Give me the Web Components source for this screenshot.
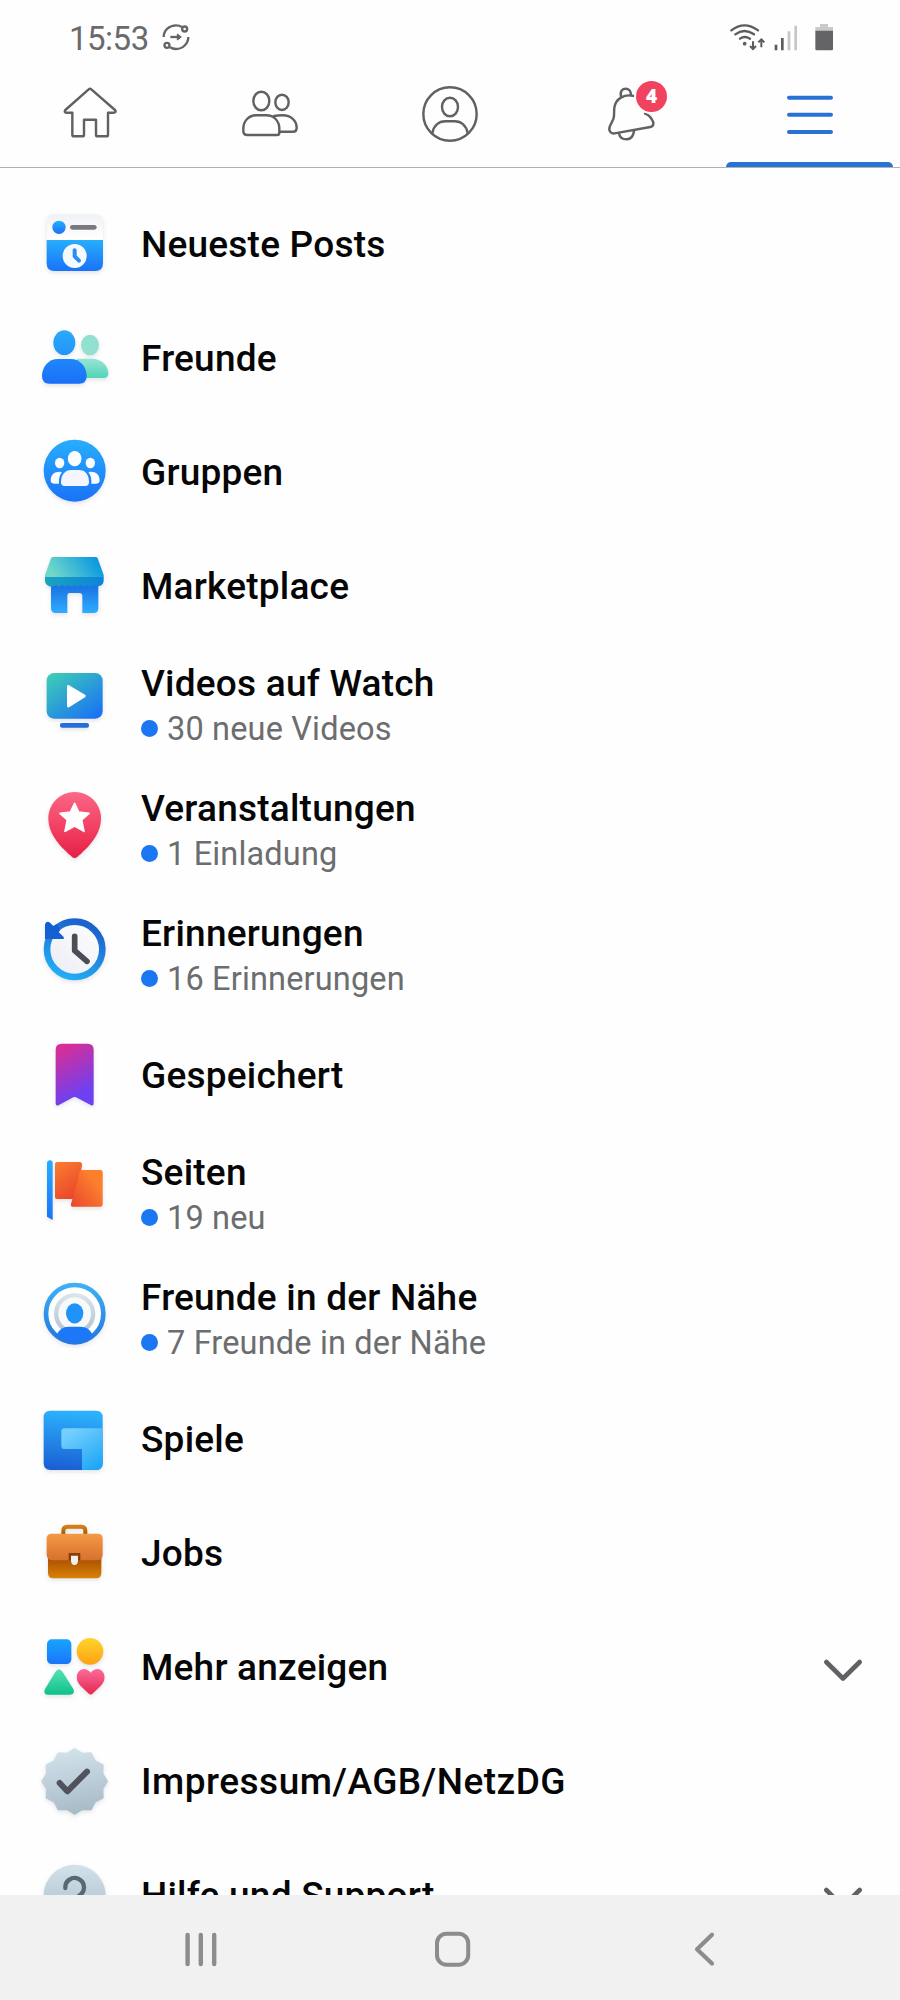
<!DOCTYPE html>
<html lang="de">
<head>
<meta charset="utf-8">
<title>Menü</title>
<style>
html,body{margin:0;padding:0}
body{width:900px;height:2000px;overflow:hidden;background:#fefefe;font-family:Roboto,"Noto Sans",sans-serif}
.wide{letter-spacing:.5px}
</style>
</head>
<body>
<app-screen>
  <status-bar slot="top" time="15:53"></status-bar>
  <tab-bar slot="top">
    <tab-item icon="home"></tab-item>
    <tab-item icon="friends"></tab-item>
    <tab-item icon="profile"></tab-item>
    <tab-item icon="bell" badge="4"></tab-item>
    <tab-item icon="menu" active></tab-item>
  </tab-bar>
  <menu-item icon="posts">Neueste Posts</menu-item>
  <menu-item icon="people">Freunde</menu-item>
  <menu-item icon="groups">Gruppen</menu-item>
  <menu-item icon="market">Marketplace</menu-item>
  <menu-item icon="watch" note="30 neue Videos">Videos auf Watch</menu-item>
  <menu-item icon="events" note="1 Einladung">Veranstaltungen</menu-item>
  <menu-item icon="memories" note="16 Erinnerungen">Erinnerungen</menu-item>
  <menu-item icon="saved">Gespeichert</menu-item>
  <menu-item icon="pages" note="19 neu">Seiten</menu-item>
  <menu-item icon="nearby" note="7 Freunde in der Nähe">Freunde in der Nähe</menu-item>
  <menu-item icon="games">Spiele</menu-item>
  <menu-item icon="jobs">Jobs</menu-item>
  <menu-item icon="more" expandable>Mehr anzeigen</menu-item>
  <menu-item icon="legal" class="wide">Impressum/AGB/NetzDG</menu-item>
  <menu-item icon="help" expandable>Hilfe und Support</menu-item>
  <system-nav slot="bottom"></system-nav>
</app-screen>
<script>
const lin = (id, a, b, dir = 'x1="0" y1="0" x2="0" y2="1"') =>
  `<linearGradient id="${id}" ${dir}><stop offset="0" stop-color="${a}"/><stop offset="1" stop-color="${b}"/></linearGradient>`;
const BLUE = lin('b', '#27aefc', '#1a72f8');

// Each list icon: [viewBox origin y, markup]; every viewBox is 216 units for 72px.
const ICONS = {
  posts: [21, `<defs>${BLUE}${lin('w','#f1f2f6','#ffffff')}</defs>
    <path d="M50 120V66Q50 43 73 43H196Q219 43 219 66V120Z" fill="url(#w)"/>
    <path d="M50 120H219V190Q219 213 196 213H73Q50 213 50 190Z" fill="url(#b)"/>
    <circle cx="87" cy="82" r="20" fill="url(#b)"/><path d="M127 82H193" stroke="#77797f" stroke-width="14" stroke-linecap="round"/>
    <circle cx="134" cy="168" r="36" fill="#f6fafe"/><path d="M134 151V169L147 182" fill="none" stroke="#2a8cf6" stroke-width="12" stroke-linecap="round" stroke-linejoin="round"/>`],
  people: [363, `<defs>${BLUE}${lin('g','#96e4d4','#52d5b8')}${lin('k','#2aaafb','#2394f9')}${lin('m','#1f86f9','#1a70f8')}</defs>
    <ellipse cx="180" cy="435" rx="27" ry="31" fill="#92e0d0"/>
    <path d="M140 476H187C212 476 235 496 235 520Q235 534 221 534H150Z" fill="url(#g)"/>
    <ellipse cx="103" cy="428" rx="33" ry="37" fill="url(#k)"/>
    <path d="M36 528C36 500 56 477 84 477H122C150 477 170 500 170 528Q170 551 148 551H58Q36 551 36 528Z" fill="url(#m)"/>`],
  groups: [45, `<defs>${BLUE}</defs><circle cx="134" cy="152" r="93" fill="url(#b)"/>
    <g fill="#fbfcff"><ellipse cx="134" cy="116" rx="20.500" ry="23"/><ellipse cx="89" cy="129" rx="14" ry="16"/><ellipse cx="181" cy="129" rx="14" ry="16"/>
    <path d="M62 181C62 165 72 155 90 155Q97 155 95 158C88 166 86 177 87 191H72Q62 191 62 181Z"/>
    <path d="M209 181C209 165 199 155 181 155Q174 155 176 158C183 166 185 177 184 191H199Q209 191 209 181Z"/>
    <path d="M93 187C93 163 106 150 124 150H147C165 150 177 163 177 187Q177 198 166 198H104Q93 198 93 187Z" fill="#f3f7fd"/></g>`],
  market: [387, `<defs>${lin('a','#70d8c8','#0d9ae2','x1="0" y1="0.3" x2="0.85" y2="0.1"')}${lin('c','#1466dd','#30acff')}${lin('e','#1aa4bd','#0e83dc','x1="0" y1="0" x2="1" y2="0"')}</defs>
    <path d="M63 480H205V565Q205 579 191 579H157V528Q157 519 148 519H119Q112 519 112 528V579H77Q63 579 63 565Z" fill="url(#c)"/>
    <path d="M45 471H221V481C221 492 214 498 204 499Q195 499 190 495Q180 504 171 495Q161 504 152 495Q143 504 134 495Q124 504 115 495Q106 504 97 495Q87 504 78 495Q73 500 62 500C51 498 45 490 45 481Z" fill="url(#e)"/>
    <path d="M69 411H197Q201 411 203 415L221 465V471H45V465L63 415Q65 411 69 411Z" fill="url(#a)"/>`],
  watch: [39, `<defs>${lin('a','#3fd1b3','#1a72f5','x1="0" y1="0" x2="0.85" y2="1"')}</defs>
    <rect x="50" y="69" width="168" height="137" rx="22" fill="url(#a)"/>
    <path d="M115 109L163 138L115 168Z" fill="#fff" stroke="#fff" stroke-width="8" stroke-linejoin="round"/>
    <rect x="90" y="219" width="87" height="14" rx="6" fill="#256fd9"/>`],
  events: [414, `<defs>${lin('a','#fc6785','#e81f45')}</defs>
    <path d="M134 426C178 426 213 461 213 505C213 555 175 592 141 622Q134 627 127 622C93 592 55 555 55 505C55 461 90 426 134 426Z" fill="url(#a)"/>
    <path d="M134 460L146 486L177 490L155 510L162 544L134 528L105 544L112 510L90 490L121 486Z" fill="#fff" stroke="#fff" stroke-width="5" stroke-linejoin="round"/>`],
  memories: [69, `<defs>${lin('a','#1c61cc','#24b0f6','x1="0.6" y1="0" x2="0.2" y2="1"')}${lin('d','#0f5fd0','#1760d2')}${lin('w','#e9ecf3','#ffffff','x1="0" y1="1" x2="1" y2="0"')}</defs>
    <circle cx="134" cy="178" r="83" fill="url(#w)" stroke="url(#a)" stroke-width="20"/>
    <path d="M45 105C45 97 53 92 60 98L70 108L81 101L91 120L86 126L101 141Q104 147 97 147H45Z" fill="url(#d)"/>
    <path d="M134 139V182L171 214" fill="none" stroke="#4a4d56" stroke-width="17" stroke-linecap="round" stroke-linejoin="round"/>`],
  saved: [444, `<defs>${lin('a','#e12c8f','#6e40f1','x1="0.1" y1="0" x2="0.4" y2="0.9"')}</defs>
    <path d="M95 461H173Q191 461 191 479V640Q191 650 182 645L138 622Q134 620 130 622L87 645Q77 650 77 640V479Q77 461 95 461Z" fill="url(#a)"/>`],
  pages: [66, `<defs>${BLUE}${lin('p','#fb7f2f','#ea482b','x1="0" y1="0" x2="0.5" y2="1"')}${lin('q','#e8462a','#fc7f2e','x1="0" y1="1" x2="0.75" y2="0.3"')}</defs>
    <path d="M51 100Q51 91 60 91Q68 91 68 100V270L51 260Z" fill="url(#b)"/>
    <path d="M81 96H148Q157 96 156 105L141 207H81Q75 207 75 201V102Q75 96 81 96Z" fill="url(#p)"/>
    <path d="M157 120H211Q218 120 218 127V222Q218 230 211 230H128Q121 230 123 222L149 127Q151 120 157 120Z" fill="url(#q)"/>`],
  nearby: [441, `<defs>${lin('a','#3db1f4','#2277e0')}${lin('g','#d9e4eb','#b4c4d0')}</defs>
    <circle cx="134" cy="551" r="86" fill="#fff" stroke="url(#a)" stroke-width="14"/>
    <circle cx="134" cy="551" r="55.500" fill="#f7f9fb" stroke="url(#g)" stroke-width="13"/>
    <ellipse cx="134" cy="550" rx="26" ry="30.500" fill="#1f93fa"/>
    <path d="M80 616C86 598 101 590 115 590H152C168 590 181 598 188 616A86 86 0 0 1 80 616Z" fill="#1c78f8"/>`],
  games: [426, `<defs>${lin('a','#2cb3fd','#1a5fd4','x1="0.5" y1="0" x2="0.4" y2="1"')}${lin('c','#74cffd','#1ea6f6','x1="0.2" y1="0.1" x2="0.8" y2="1"')}</defs>
    <path d="M61 452H198Q218 452 218 472V610Q218 630 198 630H61Q41 630 41 610V472Q41 452 61 452Z" fill="url(#a)"/>
    <path d="M103 505H218V610Q218 630 198 630H156V567H103Q94 567 94 558V514Q94 505 103 505Z" fill="url(#c)"/>`],
  jobs: [48, `<defs>${lin('a','#f49a45','#d8702d')}${lin('c','#a04700','#db8206')}${lin('h','#d57f16','#a45403')}</defs>
    <path d="M100 103V92Q100 80 112 80H154Q166 80 166 92V103" fill="none" stroke="url(#h)" stroke-width="12"/>
    <path d="M54 165H214V219Q214 235 198 235H70Q54 235 54 219Z" fill="url(#c)"/>
    <path d="M65 101H203Q218 101 218 116V163Q218 181 200 181H68Q50 181 50 163V116Q50 101 65 101Z" fill="url(#a)"/>
    <path d="M116 159H151V181H116Z" fill="#8c3d02"/>
    <path d="M123 167H144V181Q144 195 133.500 195Q123 195 123 181Z" fill="#efeff2"/>`],
  more: [390, `<defs>${lin('b','#18a4fd','#1a76fb')}${lin('y','#ffd42c','#ffa213')}${lin('g','#58e2b4','#0dc08b')}${lin('r','#fb6b9b','#e52851')}</defs>
    <rect x="51" y="418" width="73" height="74" rx="14" fill="url(#b)"/><circle cx="180" cy="454" r="40" fill="url(#y)"/>
    <path d="M76 516Q87 499 98 516L130 567Q136 583 120 584H54Q39 583 45 567Z" fill="url(#g)"/>
    <path d="M182 518C193 504 210 504 219 516C228 530 223 547 212 558L189 580Q182 587 175 580L152 558C141 547 136 530 145 516C154 504 171 504 182 518Z" fill="url(#r)"/>`],
  legal: [42, `<defs>${lin('a','#d2e2eb','#a6bac6','x1="0.4" y1="0" x2="0.6" y2="1"')}</defs>
    <polygon points="${Array.from({length: 24}, (_, i) => {
      const r = i % 2 ? 86 : 97, t = i * Math.PI / 12;
      return (134 + r * Math.sin(t)).toFixed(1) + ',' + (154 - r * Math.cos(t)).toFixed(1);
    }).join(' ')}" fill="url(#a)" stroke="url(#a)" stroke-width="6" stroke-linejoin="round"/>
    <path d="M89 159L112 184L171 125" fill="none" stroke="#50535e" stroke-width="18" stroke-linecap="round" stroke-linejoin="round"/>`],
  help: [384, `<defs>${lin('a','#d2e2eb','#a6bac6')}</defs><circle cx="134" cy="497" r="93" fill="url(#a)"/>
    <path d="M106 474A28 28 0 1 1 150 495Q134 506 134 520" fill="none" stroke="#5a6773" stroke-width="13" stroke-linecap="round"/><circle cx="134" cy="545" r="8" fill="#5a6773"/>`]
};

const base = (name, html) => customElements.define(name, class extends HTMLElement {
  constructor() {
    super();
    this.attachShadow({mode: 'open'});
  }
  connectedCallback() {
    this.shadowRoot.innerHTML = typeof html === 'function' ? html(this) : html;
  }
});

base('app-screen', `<style>
  :host{display:flex;flex-direction:column;width:900px;height:2000px;background:#fefefe}
  main{flex:1;min-height:0;overflow:hidden;padding-top:19px;box-sizing:border-box}
</style><slot name="top"></slot><main><slot></slot></main><slot name="bottom"></slot>`);

base('status-bar', el => `<style>
  :host{display:flex;align-items:flex-start;height:70px;box-sizing:border-box;padding:20px 63px 0 69px;color:#6a6a6c}
  time{font-size:33px;line-height:38px;letter-spacing:-.5px;width:91px}
  svg{display:block;flex:none}
  .right{margin-left:auto}
</style>
<time>${el.getAttribute('time')}</time>
<svg width="34" height="34" viewBox="480 60 102 102" fill="none" stroke="#646466" stroke-width="7">
  <path d="M491 111C491 91 508 76 528 76Q538 76 546 81M565 111C565 131 548 147 528 147Q518 147 510 142"/>
  <circle cx="554" cy="87" r="7.500"/><circle cx="501" cy="136" r="7.500"/><path d="M511 111H537"/><path d="M532 102L544 111L532 120Z" fill="#646466" stroke-width="3"/>
</svg>
<svg class="right" width="110" height="34" viewBox="830 60 330 102" fill="none" stroke="#5c5c5e">
  <g stroke-width="7" stroke-linecap="round"><path d="M843 91Q882 61 923 91M855 103Q882 83 911 103M869 116Q883 106 899 116"/></g>
  <circle cx="883" cy="131" r="5.500" fill="#5c5c5e" stroke="none"/>
  <path d="M908 124V146M899 138L908 147L917 138M933 142V120M924 127L933 118L942 127" stroke-width="6"/>
  <path d="M977 134V151M996 114V151" stroke-width="8"/><path d="M1016 94V151M1036 77V151" stroke="#c6c6c8" stroke-width="8"/>
  <g stroke="none"><path d="M1109 72H1133V81H1148V93H1095V81H1109Z" fill="#c9c9cb"/><path d="M1095 92H1148V147Q1148 151 1144 151H1099Q1095 151 1095 147Z" fill="#646466"/></g>
</svg>`);

base('tab-bar', `<style>
  :host{display:grid;grid-template-columns:repeat(5,180px);height:98px;box-sizing:border-box;border-bottom:1px solid #b0b1b3}
</style><slot></slot>`);

const TABS = {
  home: ['165 240', `<path d="M266 268Q270 264 274 268L345 330Q350 337 342 338H324V404Q324 409 319 409H293Q288 409 288 404V359H252V404Q252 409 247 409H222Q217 409 217 404V338H200Q191 337 196 330Z"/>`],
  friends: ['705 240', `<ellipse cx="784" cy="303" rx="24" ry="28"/><ellipse cx="846" cy="307" rx="20" ry="23"/>
    <path d="M730 386C730 362 747 346 769 346H799C821 346 838 362 838 386V398Q838 405 831 405H742Q730 405 730 393Z"/>
    <path d="M822 348Q832 346 848 346C873 346 890 362 890 383Q890 395 879 395H839"/>`],
  profile: ['1245 240', `<circle cx="1350" cy="342" r="80"/><ellipse cx="1350" cy="321" rx="24" ry="28"/><path d="M1297 400C1301 377 1316 364 1336 364H1364C1384 364 1399 377 1403 400"/>`],
  bell: ['435 240', `<path d="M552 288C522 281 497 296 493 323C491 341 494 348 490 357L480 378C474 392 482 402 494 400L601 381C611 379 613 368 606 359C601 351 596 344 585 341"/>
    <path d="M513 289C509 273 518 266 527 266C536 266 543 273 543 286M507 400C509 412 519 418 530 418C542 418 550 408 552 393"/>`],
  menu: ['975 240', `<path d="M1017 293H1143M1017 344.500H1143M1017 396H1143" stroke="#2872d5" stroke-width="12"/>`]
};

base('tab-item', el => {
  const [origin, art] = TABS[el.getAttribute('icon')];
  const badge = el.getAttribute('badge');
  return `<style>
  :host{display:flex;justify-content:center;position:relative;height:97px}
  svg{display:block;width:70px;height:70px;margin-top:10px}
  .badge{position:absolute;left:96px;top:11px;width:31px;height:31px;border-radius:50%;background:#f1425f;color:#fff;box-shadow:0 0 0 2px #fefefe;
    font-family:"Open Sans",sans-serif;font-size:19px;font-weight:800;line-height:31px;text-align:center}
  .bar{position:absolute;left:6px;right:7px;bottom:0;height:5px;border-radius:5px 5px 0 0;background:#2872d5}
</style>
<svg viewBox="${origin} 210 210" fill="none" stroke="#606164" stroke-width="7.300" stroke-linecap="round" stroke-linejoin="round">${art}</svg>
${badge ? `<span class="badge">${badge}</span>` : ''}${el.hasAttribute('active') ? '<span class="bar"></span>' : ''}`;
});

base('menu-item', el => {
  const [y, art] = ICONS[el.getAttribute('icon')];
  const note = el.getAttribute('note');
  return `<style>
  :host{display:flex;height:${note ? 125 : 114}px;box-sizing:border-box;padding:0 36px 0 38px;letter-spacing:.22px}
  .icon{display:block;flex:none;width:72px;height:72px;margin:20px 31px 0 0;filter:drop-shadow(0 2px 2px rgba(40,50,80,.13))}
  .text{flex:1;display:flex;flex-direction:column;justify-content:center;white-space:nowrap;padding-top:2px}
  .title{font-size:37px;font-weight:500;line-height:46px;color:#060606}
  .note{display:flex;align-items:center;gap:9px;font-size:32.500px;line-height:45px;letter-spacing:.16px;color:#6c6d6f}
  .dot{width:17px;height:17px;border-radius:50%;background:#1b76f2;margin-bottom:2px}
  .chev{display:block;flex:none;width:42px;height:26px;align-self:center;margin-top:5px}
</style>
<svg class="icon" viewBox="24 ${y} 216 216">${art}</svg>
<div class="text"><div class="title"><slot></slot></div>${note ? `<div class="note"><span class="dot"></span><span>${note}</span></div>` : ''}</div>
${el.hasAttribute('expandable') ? '<svg class="chev" viewBox="0 0 42 26"><path d="M4.300 5L21 21.500L37.700 5" fill="none" stroke="#606164" stroke-width="4.600" stroke-linecap="round" stroke-linejoin="round"/></svg>' : ''}`;
});

base('system-nav', `<style>
  :host{display:flex;justify-content:space-between;align-items:flex-start;flex:none;height:105px;background:#f1f1f1;box-sizing:border-box;padding:34px 175px 0 181px}
  svg{display:block;width:40px;height:40px}
</style>
<svg viewBox="181 1929 40 40" stroke="#8c8c8c" stroke-width="4.400" stroke-linecap="round"><path d="M187.600 1935V1964M200.800 1935V1964M214.200 1935V1964"/></svg>
<svg viewBox="433 1929 40 40"><rect x="437" y="1933.700" width="31.200" height="31" rx="9.500" fill="none" stroke="#8c8c8c" stroke-width="4"/></svg>
<svg viewBox="685 1929 40 40"><path d="M712 1934.700L697 1949.200L712 1963.500" fill="none" stroke="#8c8c8c" stroke-width="4.200" stroke-linecap="round" stroke-linejoin="round"/></svg>`);
</script>
</body>
</html>
